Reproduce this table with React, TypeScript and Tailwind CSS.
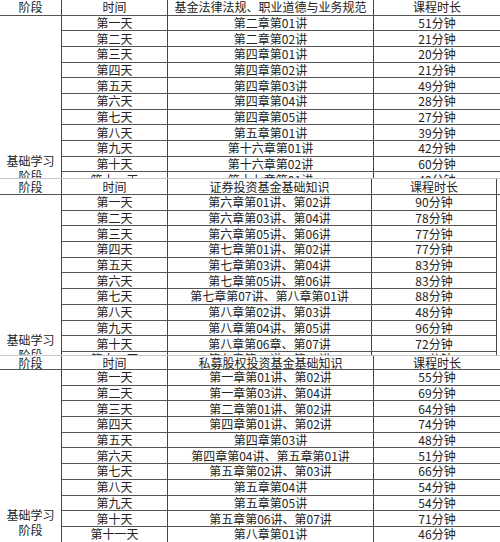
import React from "react";

type Row = [string, string, string];

const block1: Row[] = [
  ["第一天", "第二章第01讲", "51分钟"],
  ["第二天", "第二章第02讲", "21分钟"],
  ["第三天", "第四章第01讲", "20分钟"],
  ["第四天", "第四章第02讲", "21分钟"],
  ["第五天", "第四章第03讲", "49分钟"],
  ["第六天", "第四章第04讲", "28分钟"],
  ["第七天", "第四章第05讲", "27分钟"],
  ["第八天", "第五章第01讲", "39分钟"],
  ["第九天", "第十六章第01讲", "42分钟"],
  ["第十天", "第十六章第02讲", "60分钟"],
  ["第十一天", "第十七章第01讲", "40分钟"],
];

const block2: Row[] = [
  ["第一天", "第六章第01讲、第02讲", "90分钟"],
  ["第二天", "第六章第03讲、第04讲", "78分钟"],
  ["第三天", "第六章第05讲、第06讲", "77分钟"],
  ["第四天", "第七章第01讲、第02讲", "77分钟"],
  ["第五天", "第七章第03讲、第04讲", "83分钟"],
  ["第六天", "第七章第05讲、第06讲", "83分钟"],
  ["第七天", "第七章第07讲、第八章第01讲", "88分钟"],
  ["第八天", "第八章第02讲、第03讲", "48分钟"],
  ["第九天", "第八章第04讲、第05讲", "96分钟"],
  ["第十天", "第八章第06章、第07讲", "72分钟"],
  ["第十一天", "第九章第01讲、第02讲", "65分钟"],
];

const block3: Row[] = [
  ["第一天", "第一章第01讲、第02讲", "55分钟"],
  ["第二天", "第一章第03讲、第04讲", "69分钟"],
  ["第三天", "第二章第01讲、第02讲", "64分钟"],
  ["第四天", "第四章第01讲、第02讲", "74分钟"],
  ["第五天", "第四章第03讲", "48分钟"],
  ["第六天", "第四章第04讲、第五章第01讲", "51分钟"],
  ["第七天", "第五章第02讲、第03讲", "66分钟"],
  ["第八天", "第五章第04讲", "54分钟"],
  ["第九天", "第五章第05讲", "54分钟"],
  ["第十天", "第五章第06讲、第07讲", "71分钟"],
  ["第十一天", "第八章第01讲", "46分钟"],
];

function Block({
  title,
  rows,
  height,
  headerH,
  courseW,
  durW,
  top,
}: {
  title: string;
  rows: Row[];
  height: string;
  headerH: string;
  courseW: string;
  durW: string;
  top?: boolean;
}) {
  return (
    <div className={`${height} overflow-hidden flex flex-col ${top ? "border-t border-[#c8c8c8]" : ""}`}>
      <div className={`${headerH} shrink-0 flex border-b border-[#555]`}>
        <div className="w-[62px] shrink-0 border-r border-[#444] flex items-center justify-center">阶段</div>
        <div className="w-[106px] shrink-0 border-r border-[#444] flex items-center justify-center">时间</div>
        <div className={`${courseW} shrink-0 border-r border-[#444] flex items-center justify-center`}>{title}</div>
        <div className={`${durW} shrink-0 flex items-center justify-center`}>课程时长</div>
      </div>
      <div className="flex">
        <div className="w-[62px] shrink-0 border-r border-[#444] pt-[137px] flex flex-col items-center leading-[15px]">
          <span>基础学习</span>
          <span>阶段</span>
        </div>
        <div className="flex flex-col">
          {rows.map((r, i) => (
            <div key={i} className="h-[15.7px] shrink-0 flex border-b border-[#555]">
              <div className="w-[106px] shrink-0 border-r border-[#444] flex items-center justify-center">{r[0]}</div>
              <div className={`${courseW} shrink-0 border-r border-[#444] flex items-center justify-center`}>{r[1]}</div>
              <div className={`${durW} shrink-0 flex items-center justify-center`}>{r[2]}</div>
            </div>
          ))}
        </div>
      </div>
    </div>
  );
}

export default function App() {
  return (
    <div
      className="w-[500px] h-[542px] overflow-hidden bg-white text-[#222] text-[12px] leading-none flex flex-col"
      style={{ fontFamily: '"Noto Sans CJK SC", "Noto Sans", sans-serif' }}
    >
      <Block title="基金法律法规、职业道德与业务规范" rows={block1} height="h-[178px]" headerH="h-[15.5px]" courseW="w-[206px]" durW="w-[126px]" />
      <Block title="证券投资基金基础知识" rows={block2} height="h-[177px]" headerH="h-[16px]" courseW="w-[204px]" durW="w-[125px] border-r border-[#444]" top />
      <Block title="私募股权投资基金基础知识" rows={block3} height="h-[187px]" headerH="h-[14px]" courseW="w-[206px]" durW="w-[126px]" top />
    </div>
  );
}
